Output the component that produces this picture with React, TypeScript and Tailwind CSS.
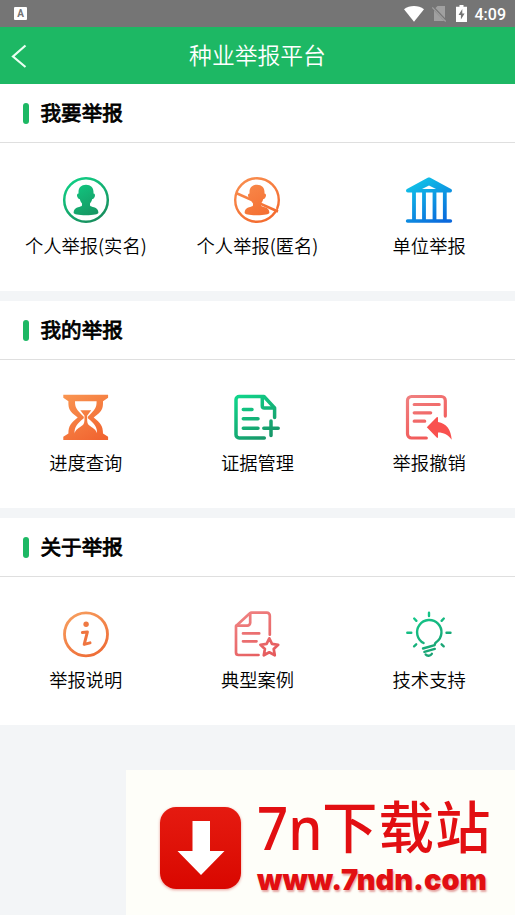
import React from "react";

const Gradient = ({ id, from, to }: { id: string; from: string; to: string }) => (
  <defs>
    <linearGradient id={id} gradientUnits="userSpaceOnUse" x1="8" y1="0" x2="36" y2="48">
      <stop offset="0" stopColor={from} />
      <stop offset="1" stopColor={to} />
    </linearGradient>
  </defs>
);

// head and shoulders shared by the two personal report icons
const Bust = ({ fill }: { fill: string }) => (
  <path
    fill={fill}
    d="M24 8.800c-4.800 0-7.500 2.900-7.500 7.200v1.500c-1.400.2-1.800 1.500-1.300 2.900.5 1.500 1.400 2.600 2.500 2.600.5 1.900 1.300 3.400 2.300 4.400v2c-.8 1-2.200 1.300-4 1.900-2.800.9-4.400 2.500-4.400 5.400 0 1.500 4.900 2.500 12.400 2.500s12.400-1 12.400-2.500c0-2.900-1.600-4.500-4.400-5.400-1.800-.6-3.200-.9-4-1.900v-2c1-1 1.800-2.500 2.300-4.400 1.100 0 2-1.100 2.500-2.600.5-1.400.1-2.700-1.300-2.900V16c0-4.300-2.700-7.200-7.500-7.200z"
  />
);

const RealNameIcon = () => (
  <svg className="h-12 w-12" viewBox="0 0 48 48" fill="none">
    <Gradient id="real" from="#0fd488" to="#18895a" />
    <circle cx="24" cy="24" r="21.800" stroke="url(#real)" strokeWidth="2.500" />
    <Bust fill="url(#real)" />
  </svg>
);

const AnonymousIcon = () => (
  <svg className="h-12 w-12" viewBox="0 0 48 48" fill="none">
    <Gradient id="anon" from="#f98f50" to="#f3682c" />
    <circle cx="24" cy="24" r="21.800" stroke="url(#anon)" strokeWidth="2.400" />
    <Bust fill="url(#anon)" />
    <path d="M31 27.500L43.500 33.100" stroke="#fff" strokeWidth="1" />
    <path d="M3 17L45 35.500" stroke="url(#anon)" strokeWidth="2.500" />
  </svg>
);

const BankIcon = () => (
  <svg className="h-12 w-12" viewBox="0 0 48 48" fill="none">
    <Gradient id="bank" from="#11cbe8" to="#0a68dc" />
    <g stroke="url(#bank)" strokeLinecap="round" strokeLinejoin="round" strokeWidth="3.600">
      <path d="M2.800 14.700L24 3.200l21.200 11.500z" />
      <path d="M2.600 45h42.800" />
    </g>
    <path d="M5 14.500L24 4l19 10.500h-9L24 9.500l-10 5z" fill="url(#bank)" />
    <path d="M9 15v29M19 15v29M29.500 15v29M39.800 15v29" stroke="url(#bank)" strokeWidth="3.800" />
  </svg>
);

const HourglassIcon = () => (
  <svg className="h-12 w-12" viewBox="0 0 48 48">
    <Gradient id="glass" from="#f99450" to="#f16430" />
    <path
      fill="url(#glass)"
      fillRule="evenodd"
      d="M1.300 1.800h44.800v3L41 8.300c.2 8.200-1.100 10-9.300 16.200C38.500 30 41 33 41 40.500l5.100 3.300v3.100H1.300v-3.100l5.100-3.300c0-7.500 2.500-10.500 9.300-16C7.500 18.300 6.200 16.500 6.400 8.300L1.300 4.800z
      M13 8.300c0 6.200 1.200 8.300 8.800 15.400v1.500C14.500 31 12.500 34 12.500 40.500c1-4 4.300-5.300 8-8.200 1.600-1.300 2-3.500 2-6.800v-2.700l-4.200-5.500h11l-4.200 5.500v2.700c0 3.300.4 5.500 2 6.800 3.700 2.900 7 4.200 8 8.200 0-6.500-2-9.500-9.300-15.300v-1.500c7.600-7.100 8.800-9.200 8.800-15.400z"
    />
  </svg>
);

const EvidenceIcon = () => (
  <svg className="h-12 w-12" viewBox="0 0 48 48" fill="none">
    <Gradient id="evidence" from="#10d68b" to="#189266" />
    <g stroke="url(#evidence)" strokeWidth="3.500" strokeLinecap="round" strokeLinejoin="round">
      <path d="M31.300 45H6.200A3.200 3.200 0 0 1 3 41.800V6.700a3.200 3.200 0 0 1 3.200-3.200H31L41.600 15v9.600" />
      <path d="M29.300 3.800V13a2 2 0 0 0 2 2h9.700" />
      <path d="M10.300 16.500h8.700M10.300 25.800h14.700M10.300 35.300h14.700M30.800 35.300h14.400M38 28.100v14.400" />
    </g>
  </svg>
);

const RevokeIcon = () => (
  <svg className="h-12 w-12" viewBox="0 0 48 48" fill="none">
    <Gradient id="revoke" from="#f08080" to="#f2504f" />
    <g stroke="url(#revoke)" strokeWidth="3.200" strokeLinecap="round" strokeLinejoin="round">
      <path d="M21.300 45H6.500a4 4 0 0 1-4-4V7.500a4 4 0 0 1 4-4h29.800a4 4 0 0 1 4 4v15.600" />
      <path d="M9.200 11.500h25M9.200 19.800h16.500M9.200 28.200h10.500" />
    </g>
    <path fill="#f9514f" d="M21.800 34.200l9.900-9.900c.7-.6 1.300-.3 1.300.6v4.200c8.400 1.200 13 7.800 13.700 17.700-3.500-4.900-7.800-7.200-13.700-7.200v4.400c0 .9-.6 1.200-1.300.6z" />
  </svg>
);

const InfoIcon = () => (
  <svg className="h-12 w-12" viewBox="0 0 48 48" fill="none">
    <Gradient id="info" from="#f7a060" to="#ee6a34" />
    <circle cx="24" cy="24.300" r="21.500" stroke="url(#info)" strokeWidth="2.800" />
    <circle cx="24.100" cy="14.300" r="2.700" fill="#ef7943" />
    <path d="M20.400 22.600l5-.7-3.200 12.500 5.800-1.500" stroke="#ef7540" strokeWidth="3" strokeLinecap="round" strokeLinejoin="round" />
  </svg>
);

const CaseIcon = () => (
  <svg className="h-12 w-12" viewBox="0 0 48 48" fill="none">
    <Gradient id="case" from="#f08484" to="#e55a5c" />
    <g stroke="url(#case)" strokeWidth="2.700" strokeLinecap="round" strokeLinejoin="round">
      <path d="M25.500 45H5.500A2.500 2.500 0 0 1 3 42.500V16L16.600 3.600c.6-.6 1.200-.9 2-.9h15.200a3 3 0 0 1 3 3v19" />
      <path d="M17.200 3.300v9.500a2.800 2.800 0 0 1-2.800 2.800H3.500" />
      <path d="M10 23.400h16.200M10 31.300h13.500" />
      <path d="M36.300 28.300l2.700 5.600 6.200.9-4.500 4.300 1.100 6.200-5.500-3-5.500 3 1.100-6.200-4.500-4.300 6.200-.9z" />
    </g>
  </svg>
);

const BulbIcon = () => (
  <svg className="h-12 w-12" viewBox="0 0 48 48" fill="none">
    <Gradient id="bulb" from="#12cd8c" to="#1b9c70" />
    <g stroke="url(#bulb)" strokeWidth="2.400" strokeLinecap="round" strokeLinejoin="round">
      <path d="M18.600 33A12.200 12.200 0 1 1 31.400 32.100c-1.200.8-1.700 1.700-1.700 3L18 38.500" />
      <path d="M19.400 41.900l10.400-3M20.700 44.500c1.300 1.700 4.900 1.700 6.200-.7" />
      <path d="M24 2.700v3.400M2.300 22.800h4M41.500 22.800h4M9.200 8.500l2.200 2.300M38.800 8.500l-2.200 2.300M11.200 34.300l-2.100 2M36.600 34.300l2.100 2" />
    </g>
  </svg>
);

const sections = [
  {
    title: "我要举报",
    items: [
      { label: "个人举报(实名)", icon: RealNameIcon },
      { label: "个人举报(匿名)", icon: AnonymousIcon },
      { label: "单位举报", icon: BankIcon },
    ],
  },
  {
    title: "我的举报",
    items: [
      { label: "进度查询", icon: HourglassIcon },
      { label: "证据管理", icon: EvidenceIcon },
      { label: "举报撤销", icon: RevokeIcon },
    ],
  },
  {
    title: "关于举报",
    items: [
      { label: "举报说明", icon: InfoIcon },
      { label: "典型案例", icon: CaseIcon },
      { label: "技术支持", icon: BulbIcon },
    ],
  },
];

const StatusBar = () => (
  <div className="flex h-[27px] items-center bg-[#757575] pl-[14px] pr-[9px] text-white">
    <div className="flex h-[13px] w-[13px] items-center justify-center rounded-[1px] bg-white font-['Roboto',sans-serif] text-[10px] font-bold leading-none text-[#757575]">
      A
    </div>
    <svg className="ml-auto h-4 w-5" viewBox="0 0 20 16">
      <path fill="#fff" d="M0 3.300C5.500-1.100 14.500-1.100 20 3.300L10 15.800z" />
    </svg>
    <svg className="ml-2 h-[17px] w-[15px]" viewBox="0 0 15 17">
      <path fill="#a0a0a0" d="M5.500 1H13v15H2V4.500z" />
      <path d="M.8 2.200l13.400 14" stroke="#757575" strokeWidth="2.600" />
      <path d="M.3 2.500l13.400 14" stroke="#a0a0a0" strokeWidth="1.200" />
    </svg>
    <svg className="ml-[9px] h-[17px] w-[11px]" viewBox="0 0 11 17">
      <path fill="#fff" d="M3.500 0h4v1.700H11V17H0V1.700h3.500z" />
      <path fill="#757575" d="M6.300 4L2.500 10h2.400v4.500l3.700-6H6.300z" />
    </svg>
    <span className="ml-2 mt-0.5 font-['Roboto',sans-serif] text-base font-medium leading-none">4:09</span>
  </div>
);

const DownloadBanner = () => (
  <div className="absolute bottom-0 right-0 flex h-[145px] w-[389px] bg-[#fefef9] pl-[34px] pt-[37px]">
    <div className="flex h-[82px] w-[81px] shrink-0 items-center justify-center rounded-2xl bg-linear-to-b from-[#e51a10] to-[#d90600] shadow-[0_1px_3px_rgba(200,0,0,0.4)]">
      <svg className="h-[54px] w-[48px]" viewBox="0 0 48 54">
        <path fill="#fff" d="M15.500 0H33v30h14.500L24 54 .5 30h15z" />
      </svg>
    </div>
    <div className="-mt-[14px] ml-4 text-[#e20f12]">
      <div className="flex h-[71px] whitespace-nowrap font-medium">
        <span className="mt-1 w-[65px] origin-left scale-x-[0.91] font-['Noto_Sans',sans-serif] text-[60px] leading-[60px]">7n</span>
        <span className="mt-px font-['Noto_Sans_CJK_SC',sans-serif] text-[55.5px] leading-[60px] tracking-[1px]">下载站</span>
      </div>
      <div className="whitespace-nowrap font-['Inter',sans-serif] text-[29px] font-black leading-8 [text-shadow:1px_2px_2px_rgba(180,0,0,0.35)]">
        www.7ndn.com
      </div>
    </div>
  </div>
);

const App = () => {
  return (
    <div className="relative h-[915px] w-[515px] overflow-hidden bg-[#f3f5f7] font-['Noto_Sans_CJK_SC',sans-serif] text-black">
      <StatusBar />
      <header className="grid h-[57px] grid-cols-[60px_1fr_60px] items-center bg-[#1db864] text-white">
        <svg className="ml-[11px] h-6 w-4" viewBox="0 0 16 24" fill="none">
          <path d="M14.500 1.500L2 12.500l12.500 10.500" stroke="#eafff2" strokeWidth="2.200" />
        </svg>
        <h1 className="text-center text-[22.8px] font-[350] leading-none">种业举报平台</h1>
      </header>

      {sections.map((section) => (
        <section key={section.title} className="mb-[10px] h-[207px] bg-white">
          <div className="flex h-[59px] items-center border-b border-[#dfdfdf] pl-[23px]">
            <span className="h-[21px] w-1.5 rounded-full bg-[#1db864]" />
            <h2 className="-mt-0.5 ml-[11.5px] text-[20.6px] font-normal leading-none [-webkit-text-stroke:0.8px_#000]">{section.title}</h2>
          </div>
          <div className="grid grid-cols-3 pt-[33px]">
            {section.items.map(({ label, icon: Icon }) => (
              <div key={label} className="flex flex-col items-center">
                <Icon />
                <span className="mt-2 whitespace-nowrap text-[18.3px] font-[350] leading-[26px]">{label}</span>
              </div>
            ))}
          </div>
        </section>
      ))}

      <DownloadBanner />
    </div>
  );
};

export default App;
